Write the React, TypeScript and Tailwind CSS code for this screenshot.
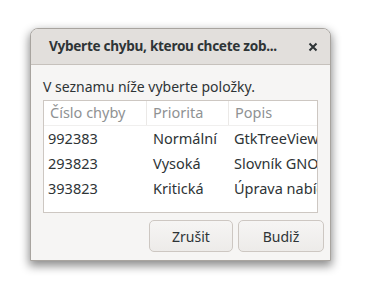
export default function App() {
  const rows = [
    ["992383", "Normální", "GtkTreeView"],
    ["293823", "Vysoká", "Slovník GNOME"],
    ["393823", "Kritická", "Úprava nabídky"],
  ];

  return (
    <div className="w-[366px] h-[299px] bg-white pt-[28px] pl-[30px] font-['Noto_Sans',sans-serif] text-[#2e3436]">
      {/* DIALOG */}
      <div className="w-[301px] h-[233px] flex flex-col rounded-t-[8px] border border-[#a8a49f] bg-[#f6f5f4] shadow-[0_4px_10px_1px_rgba(0,0,0,0.45)] overflow-hidden">
        {/* HEADER BAR */}
        <div className="h-[36px] flex items-center bg-[#e2dfdc] border-b border-[#c6c1bc] shrink-0">
          <div className="flex-1 pl-[18px] text-[13.6px] font-bold whitespace-nowrap tracking-[-0.3px]">
            Vyberte chybu, kterou chcete zob...
          </div>
          <div className="w-[34px] flex justify-center items-center">
            <svg width="10" height="10" viewBox="0 0 10 10">
              <path d="M1.5 1.5 L8.5 8.5 M8.5 1.5 L1.5 8.5" stroke="#2e3436" strokeWidth="2" />
            </svg>
          </div>
        </div>

        {/* BODY */}
        <div className="flex-1 flex flex-col px-[12px]">
          <div className="text-[14px] mt-[13px] leading-[18px]">V seznamu níže vyberte položky.</div>

          <div className="mt-[4px] h-[113px] bg-white border border-[#cdc7c2] overflow-hidden">
            <div className="flex h-[25px] items-center border-b border-[#f0efee] text-[14.5px] text-[#8f9293]">
              <div className="w-[103px] pl-[6px] border-r border-[#ebe9e7] h-full flex items-center">Číslo chyby</div>
              <div className="w-[82px] pl-[6px] border-r border-[#ebe9e7] h-full flex items-center">Priorita</div>
              <div className="flex-1 pl-[6px] whitespace-nowrap">Popis</div>
            </div>
            {rows.map((r) => (
              <div key={r[0]} className="flex h-[25px] items-center text-[14.5px] whitespace-nowrap">
                <div className="w-[103px] pl-[4px]">{r[0]}</div>
                <div className="w-[82px] pl-[6px]">{r[1]}</div>
                <div className="flex-1 pl-[5px] overflow-hidden">{r[2]}</div>
              </div>
            ))}
          </div>

          {/* BUTTONS */}
          <div className="flex justify-end gap-[5px] mt-[7px] -mr-[6px]">
            <button className="w-[84px] h-[32px] rounded-[5px] border border-[#cdc7c2] bg-gradient-to-b from-[#f6f5f4] to-[#edebe9] text-[14px] text-[#2e3436]">
              Zrušit
            </button>
            <button className="w-[86px] h-[32px] rounded-[5px] border border-[#cdc7c2] bg-gradient-to-b from-[#f6f5f4] to-[#edebe9] text-[14px] text-[#2e3436]">
              Budiž
            </button>
          </div>
        </div>
      </div>
    </div>
  );
}
